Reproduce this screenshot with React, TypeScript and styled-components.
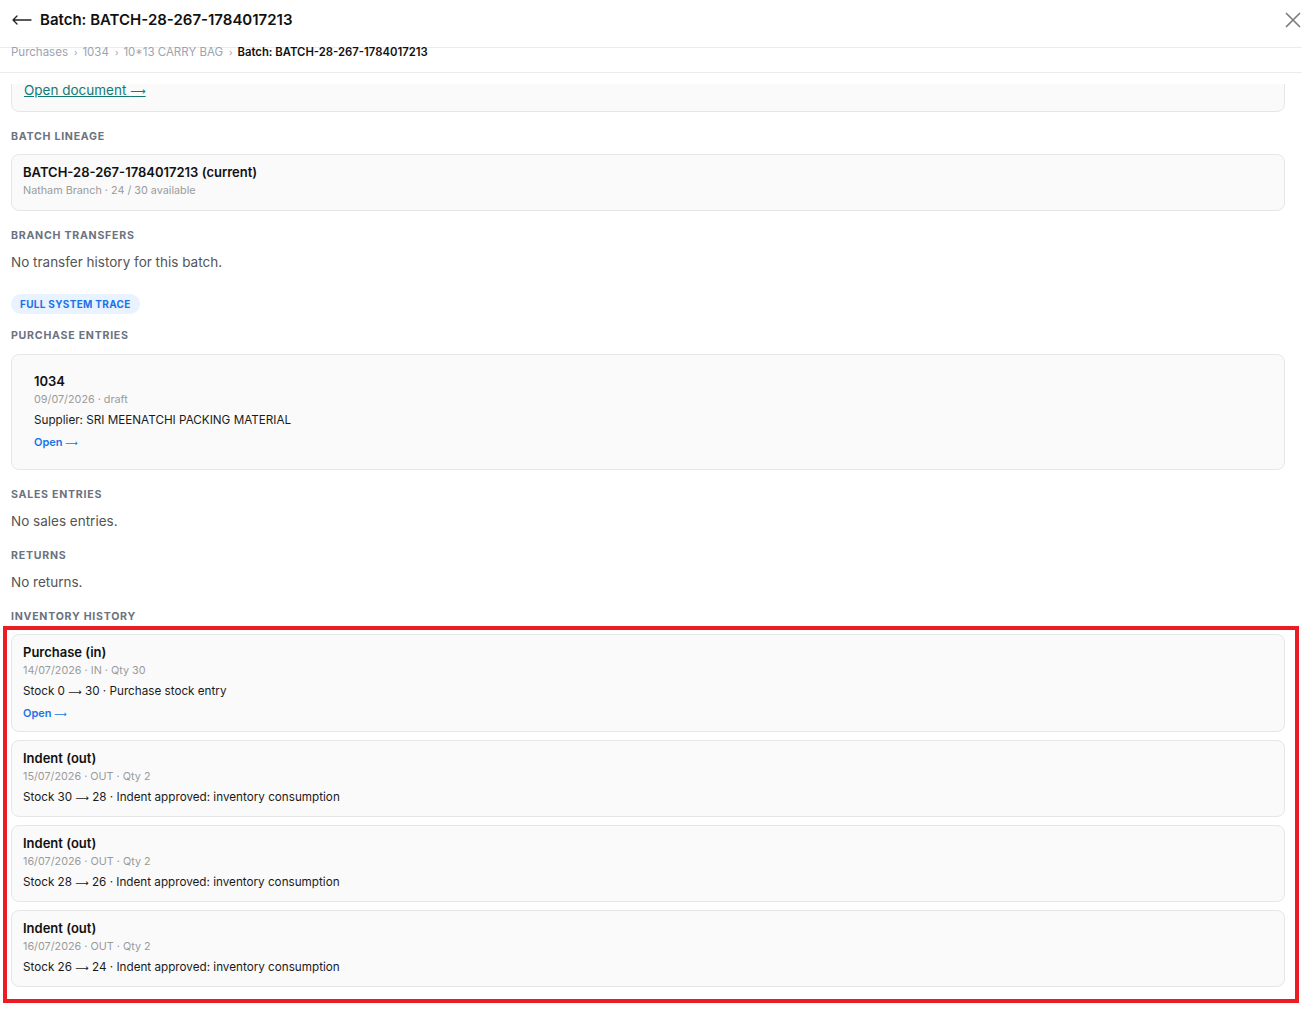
import React from 'react'
import styled, { createGlobalStyle } from 'styled-components'

type Move = {
	title: string
	date: string
	dir: 'IN' | 'OUT'
	qty: number
	from: number
	to: number
	note: string
	link?: boolean
}

const moves: Move[] = [
	{ title: 'Purchase (in)', date: '14/07/2026', dir: 'IN', qty: 30, from: 0, to: 30, note: 'Purchase stock entry', link: true },
	{ title: 'Indent (out)', date: '15/07/2026', dir: 'OUT', qty: 2, from: 30, to: 28, note: 'Indent approved: inventory consumption' },
	{ title: 'Indent (out)', date: '16/07/2026', dir: 'OUT', qty: 2, from: 28, to: 26, note: 'Indent approved: inventory consumption' },
	{ title: 'Indent (out)', date: '16/07/2026', dir: 'OUT', qty: 2, from: 26, to: 24, note: 'Indent approved: inventory consumption' },
]

const crumbs = ['Purchases', '1034', '10*13 CARRY BAG']

const GlobalStyle = createGlobalStyle`
  * { box-sizing: border-box; }
  body {
    margin: 0;
    background: #fff;
    color: #111;
    font-family: Inter, "Open Sans", Arial, sans-serif;
  }
`

const Page = styled.div`
  display: flex;
  flex-direction: column;
  height: 100vh;
  overflow: hidden;
`

const Top = styled.div`
  padding-bottom: 11px;
`

const Header = styled.header`
  height: 48px;
  display: flex;
  align-items: center;
  justify-content: space-between;
  padding: 0 0 0 12px;
  border-bottom: 1px solid #ececec;
`

const TitleRow = styled.div`
  display: flex;
  align-items: center;
  gap: 8px;
  margin-top: -8px;
`

const Title = styled.h1`
  margin: 0;
  font-size: 15px;
  font-weight: 600;
  color: #111;
`

const IconButton = styled.button`
  border: 0;
  background: none;
  padding: 0;
  display: flex;
  cursor: pointer;
  margin-top: -8px;
`

const Crumbs = styled.nav`
  height: 25px;
  display: flex;
  align-items: flex-start;
  padding: 0 11px;
  border-bottom: 1px solid #ececec;
  font-size: 11.5px;
  line-height: 9px;
  color: #9ca3af;
`

const Crumb = styled.span<{ $current?: boolean }>`
  color: ${p => (p.$current ? '#111' : '#9ca3af')};
  font-weight: ${p => (p.$current ? 600 : 400)};
  font-size: ${p => (p.$current ? '11.3px' : '11.5px')};
`

const Sep = styled.span`
  font-size: 9px;
  margin: 0 5px 0 6px;
  color: #9ca3af;
`

const Arrow = styled.span`
  font-family: "DejaVu Sans", sans-serif;
  font-weight: 400;
  font-size: 0.8em;
  line-height: 0;
`

const Viewport = styled.main`
  flex: 1;
  overflow: hidden;
  padding: 0 17px 0 11px;
  display: flex;
  flex-direction: column;
`

const Card = styled.div`
  background: #fafafa;
  border: 1px solid #e6e6e6;
  border-radius: 8px;
  padding: 8px 11px 9px;
`

const DocCard = styled(Card)`
  margin-top: -17px;
  padding: 12px 12px 11px;
`

const LineageCard = styled(Card)`
  padding-bottom: 10px;
`

const EntryCard = styled(Card)`
  margin-top: 1px;
  padding: 17px 22px 18px;
`

const DocLink = styled.a`
  display: block;
  font-size: 13.5px;
  line-height: 20px;
  color: #137a72;
  text-decoration: underline;
`

const Label = styled.h2`
  margin: 17px 0 9px;
  font-size: 10.6px;
  line-height: 16px;
  font-weight: 700;
  letter-spacing: 0.07em;
  text-transform: uppercase;
  color: #6b7280;
`

const Empty = styled.p`
  margin: -1px 0 0;
  font-size: 13.5px;
  line-height: 20px;
  color: #555;
`

const Badge = styled.span`
  align-self: flex-start;
  margin-top: 22px;
  padding: 0 9px;
  height: 20px;
  display: inline-flex;
  align-items: center;
  border-radius: 10px;
  background: #e9f2ff;
  color: #1a73e8;
  font-size: 10px;
  font-weight: 700;
  letter-spacing: 0.03em;

  & + ${Label} {
    margin-top: 14px;
  }
`

const ItemTitle = styled.div`
  font-size: 13px;
  line-height: 18px;
  font-weight: 600;
  color: #111;
`

const Meta = styled.div`
  margin-top: 1px;
  font-size: 10.8px;
  line-height: 18px;
  color: #9a9a9a;
`

const Desc = styled.div`
  margin-top: 1px;
  font-size: 11.7px;
  line-height: 20px;
  color: #1a1a1a;
`

const OpenLink = styled.a`
  display: block;
  margin-top: 3px;
  font-size: 11px;
  line-height: 18px;
  font-weight: 600;
  color: #1a73e8;
  text-decoration: none;
`

const History = styled.div`
  position: relative;
  display: flex;
  flex-direction: column;
  gap: 8px;

  &::after {
    content: '';
    position: absolute;
    top: -8px;
    left: -8px;
    right: -14px;
    bottom: -16px;
    border: 4px solid #ec1c24;
    pointer-events: none;
  }
`

const BackArrow = () => (
	<svg width="20" height="10" viewBox="0 0 20 10" fill="none" stroke="#222" strokeWidth="1.3" strokeLinecap="round">
		<path d="M1 5h18M1 5l4-4M1 5l4 4" />
	</svg>
)

const CloseIcon = () => (
	<svg width="18" height="18" viewBox="0 0 18 18" fill="none" stroke="#7a7a7a" strokeWidth="1.6">
		<path d="M2 2l14 14M16 2L2 16" />
	</svg>
)

const App: React.FC = () => {
	return (
		<Page>
			<GlobalStyle />
			<Top>
				<Header>
					<TitleRow>
						<BackArrow />
						<Title>Batch: BATCH-28-267-1784017213</Title>
					</TitleRow>
					<IconButton aria-label="Close">
						<CloseIcon />
					</IconButton>
				</Header>
				<Crumbs>
					{crumbs.map(c => (
						<React.Fragment key={c}>
							<Crumb>{c}</Crumb>
							<Sep>›</Sep>
						</React.Fragment>
					))}
					<Crumb $current>Batch: BATCH-28-267-1784017213</Crumb>
				</Crumbs>
			</Top>
			<Viewport>
				<DocCard>
					<DocLink href="#">
						Open document <Arrow>⟶</Arrow>
					</DocLink>
				</DocCard>

				<Label>Batch lineage</Label>
				<LineageCard>
					<ItemTitle>BATCH-28-267-1784017213 (current)</ItemTitle>
					<Meta>Natham Branch · 24 / 30 available</Meta>
				</LineageCard>

				<Label>Branch transfers</Label>
				<Empty>No transfer history for this batch.</Empty>

				<Badge>FULL SYSTEM TRACE</Badge>
				<Label>Purchase entries</Label>
				<EntryCard>
					<ItemTitle>1034</ItemTitle>
					<Meta>09/07/2026 · draft</Meta>
					<Desc>Supplier: SRI MEENATCHI PACKING MATERIAL</Desc>
					<OpenLink href="#">
						Open <Arrow>⟶</Arrow>
					</OpenLink>
				</EntryCard>

				<Label>Sales entries</Label>
				<Empty>No sales entries.</Empty>

				<Label>Returns</Label>
				<Empty>No returns.</Empty>

				<Label>Inventory history</Label>
				<History>
					{moves.map((m, i) => (
						<Card key={i}>
							<ItemTitle>{m.title}</ItemTitle>
							<Meta>
								{m.date} · {m.dir} · Qty {m.qty}
							</Meta>
							<Desc>
								Stock {m.from} <Arrow>⟶</Arrow> {m.to} · {m.note}
							</Desc>
							{m.link && (
								<OpenLink href="#">
									Open <Arrow>⟶</Arrow>
								</OpenLink>
							)}
						</Card>
					))}
				</History>
			</Viewport>
		</Page>
	)
}

export default App
